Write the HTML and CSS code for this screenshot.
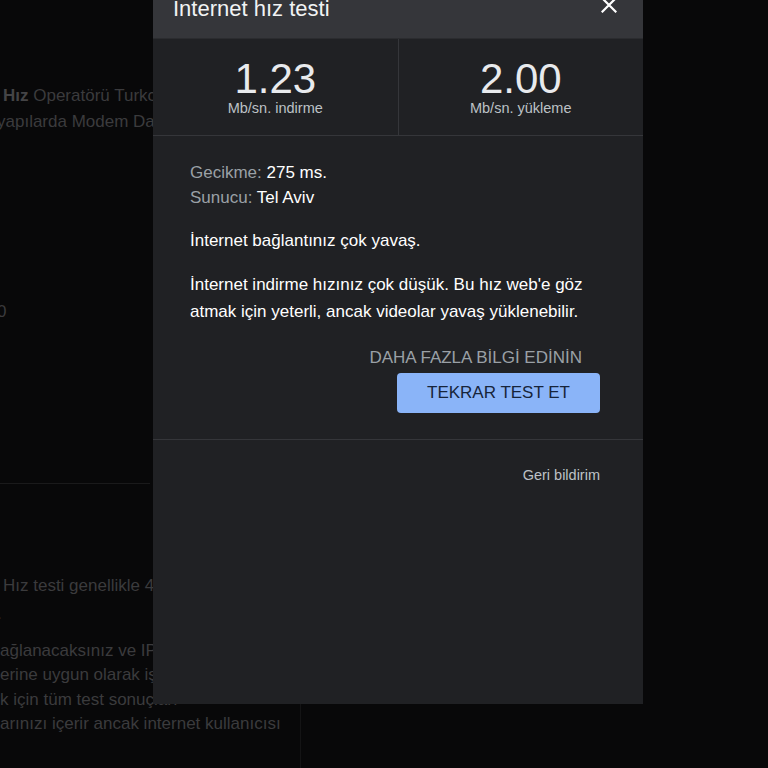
FILE: index.html
```html
<!DOCTYPE html>
<html lang="tr">
<head>
<meta charset="utf-8">
<title>Internet hız testi</title>
<link rel="stylesheet" href="styles.css">
</head>
<body>
<div class="page">
  <div class="bg-col">
    <div class="bg-block b1">
      <div class="ln"><b>Hız</b> Operatörü Turkcell Superonline Altyapısı</div>
      <div class="ln shift">yapılarda Modem Dahil Fiyat Bilgisi</div>
    </div>
    <div class="bg-block b2"><div class="ln shift">0</div></div>
    <div class="bg-rule"></div>
    <div class="bg-block b3">
      <div class="ln">Hız testi genellikle 40 saniyeden kısa sürer</div>
      <div class="ln shift">.</div>
    </div>
    <div class="bg-block b4">
      <div class="ln">ağlanacaksınız ve IP adresiniz paylaşılacaktır</div>
      <div class="ln">erine uygun olarak işlenecektir</div>
      <div class="ln">k için tüm test sonuçları</div>
      <div class="ln">arınızı içerir ancak internet kullanıcısı</div>
    </div>
  </div>

  <div class="dialog">
    <div class="dlg-head">
      <div class="dlg-title">Internet hız testi</div>
      <button class="close" aria-label="Kapat">
        <svg width="16" height="16" viewBox="0 0 16 16"><path d="M1.5 1.5 L14.5 14.5 M14.5 1.5 L1.5 14.5" stroke="#ffffff" stroke-width="2.2" stroke-linecap="square" fill="none"/></svg>
      </button>
    </div>
    <div class="stats">
      <div class="stat">
        <div class="num">1.23</div>
        <div class="unit">Mb/sn. indirme</div>
      </div>
      <div class="stat">
        <div class="num">2.00</div>
        <div class="unit">Mb/sn. yükleme</div>
      </div>
    </div>
    <div class="dlg-body">
      <div class="meta">
        <div><span class="lbl">Gecikme:</span> 275 ms.</div>
        <div><span class="lbl">Sunucu:</span> Tel Aviv</div>
      </div>
      <p class="msg">İnternet bağlantınız çok yavaş.</p>
      <p class="msg long">İnternet indirme hızınız çok düşük. Bu hız web'e göz atmak için yeterli, ancak videolar yavaş yüklenebilir.</p>
      <div class="actions">
        <a class="more">DAHA FAZLA BİLGİ EDİNİN</a>
        <button class="retry">TEKRAR TEST ET</button>
      </div>
    </div>
    <div class="dlg-foot">
      <a class="feedback">Geri bildirim</a>
    </div>
  </div>
</div>
</body>
</html>
```

FILE: styles.css
```css
* { box-sizing: border-box; }
html, body { margin: 0; padding: 0; }
body {
  background: #080809;
  font-family: "Liberation Sans", Arial, sans-serif;
}
.page {
  position: relative;
  width: 768px;
  height: 768px;
  overflow: hidden;
}

/* dimmed background page */
.bg-col {
  width: 301px;
  height: 768px;
  border-right: 1px solid #141415;
  display: flex;
  flex-direction: column;
  color: #3b3b3d;
  font-size: 17px;
  white-space: nowrap;
  overflow: hidden;
}
.bg-block .ln { padding-left: 3px; }
.bg-block .ln.shift { padding-left: 0; margin-left: -3px; }
.b1 { margin-top: 83px; line-height: 26px; }
.b1 b { color: #444446; }
.b2 { margin-top: 164px; line-height: 26px; }
.b2 .ln { margin-left: -5px; }
.bg-rule {
  margin-top: 158px;
  width: 150px;
  height: 1px;
  background: #1a1a1b;
}
.b3 { margin-top: 88px; line-height: 28px; }
.b4 { margin-top: 11px; line-height: 24.4px; }
.b4 .ln { padding-left: 0; }

/* dialog */
.dialog {
  position: absolute;
  left: 153px;
  top: -20px;
  width: 490px;
  height: 724px;
  background: #202124;
  display: flex;
  flex-direction: column;
  color: #e8eaed;
}
.dlg-head {
  height: 59px;
  background: #35363a;
  display: flex;
  align-items: flex-start;
  justify-content: space-between;
  padding: 16px 26px 0 20px;
  border-bottom: 1px solid #2b2c2f;
}
.dlg-title {
  font-size: 22px;
  line-height: 26px;
  color: #f1f3f4;
}
.close {
  background: none;
  border: 0;
  padding: 0;
  margin-top: 1px;
  width: 16px;
  height: 16px;
  display: flex;
}

.stats {
  display: flex;
  border-bottom: 1px solid #35363a;
}
.stat {
  flex: 1;
  text-align: center;
  padding: 18px 0 20px;
}
.stat + .stat { border-left: 1px solid #35363a; }
.num {
  font-size: 42px;
  line-height: 44px;
  color: #e8eaed;
}
.unit {
  font-size: 14.5px;
  line-height: 14px;
  color: #bdc1c6;
}

.dlg-body {
  padding: 24px 43px 26px 37px;
  font-size: 17px;
  border-bottom: 1px solid #35363a;
}
.meta { line-height: 25px; color: #ffffff; }
.lbl { color: #9aa0a6; }
.msg {
  margin: 18px 0 0;
  line-height: 25px;
  color: #ffffff;
}
.msg.long { line-height: 27px; }
.actions {
  display: flex;
  flex-direction: column;
  align-items: flex-end;
  margin-top: 23px;
}
.more {
  color: #9aa0a6;
  line-height: 20px;
  margin-right: 18px;
}
.retry {
  margin-top: 5px;
  width: 203px;
  height: 40px;
  background: #8ab4f8;
  border: 0;
  border-radius: 4px;
  font-family: "Liberation Sans", Arial, sans-serif;
  font-size: 17px;
  color: #17243a;
}
.dlg-foot {
  display: flex;
  justify-content: flex-end;
  padding: 26px 43px 0 0;
}
.feedback {
  font-size: 14.5px;
  line-height: 18px;
  color: #bdc1c6;
}
```
